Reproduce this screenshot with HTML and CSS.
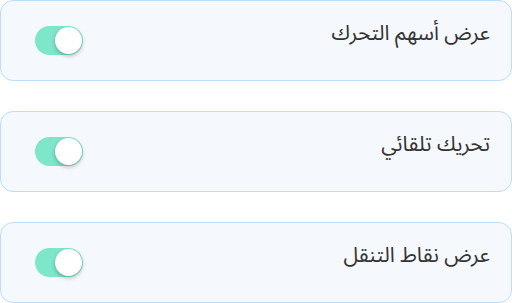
FILE: index.html
```html
<!DOCTYPE html>
<html lang="ar" dir="rtl">
<head>
    <meta charset="utf-8">
    <title>الإعدادات</title>
    <link rel="stylesheet" href="styles.css">
</head>
<body>
  <div class="settings">
      <div class="setting-card">
          <span class="setting-label">عرض أسهم التحرك</span>
          <label class="switch">
              <input type="checkbox" checked>
              <span class="slider"></span>
          </label>
      </div>
      <div class="setting-card">
          <span class="setting-label">تحريك تلقائي</span>
          <label class="switch">
              <input type="checkbox" checked>
              <span class="slider"></span>
          </label>
      </div>
      <div class="setting-card">
          <span class="setting-label">عرض نقاط التنقل</span>
          <label class="switch">
              <input type="checkbox" checked>
              <span class="slider"></span>
          </label>
      </div>
  </div>
</body>
</html>
```

FILE: styles.css
```css
body {
    margin: 0;
    background-color: #ffffff;
    font-family: "Noto Sans Arabic", "DejaVu Sans", sans-serif;
}

.settings {
    display: flex;
    flex-direction: column;
    gap: 30px;
}

.setting-card {
    display: flex;
    align-items: center;
    justify-content: space-between;
    height: 79px;
    padding: 0 21px 0 34px;
    background-color: #f5f9fe;
    border: 1px solid #bcdcf7;
    border-radius: 13px;
}

.setting-label {
    font-size: 21px;
    color: #333333;
    margin-top: -16px;
}

.switch {
    position: relative;
    display: inline-block;
    width: 48px;
    height: 29px;
    margin-top: -1px;
}

.switch input {
    display: none;
}

.slider {
    position: absolute;
    inset: 0;
    background-color: #7de6cb;
    border-radius: 15px;
}

.slider::before {
    content: "";
    position: absolute;
    top: 1px;
    left: 20px;
    width: 27px;
    height: 27px;
    background-color: #ffffff;
    border-radius: 50%;
    box-shadow: 0 2px 4px rgba(0, 0, 0, 0.25);
}
```
